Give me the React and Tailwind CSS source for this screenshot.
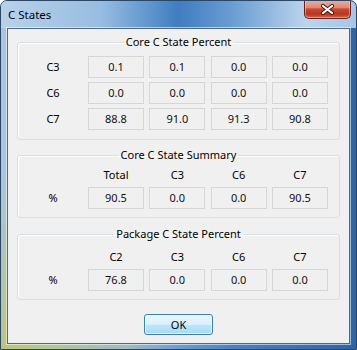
import React from 'react';

const font = { fontFamily: '"Noto Sans", "Open Sans", sans-serif' };

const coreRows = [
  { label: 'C3', values: ['0.1', '0.1', '0.0', '0.0'] },
  { label: 'C6', values: ['0.0', '0.0', '0.0', '0.0'] },
  { label: 'C7', values: ['88.8', '91.0', '91.3', '90.8'] },
];

const ValueBox = ({ value }) => (
  <div className="w-[56px] h-[22px] border border-[#d6d6d6] bg-[#f0f0f0] flex items-center justify-center text-[11px] text-[#111]">
    {value}
  </div>
);

const Row = ({ label, values }) => (
  <div className="flex items-center">
    <div className="w-[70px] text-center text-[11px] text-black">{label}</div>
    <div className="flex gap-[5.33px]">
      {values.map((v, i) => (
        <ValueBox key={i} value={v} />
      ))}
    </div>
  </div>
);

const HeaderRow = ({ headers }) => (
  <div className="flex items-center h-[15px]">
    <div className="w-[70px]" />
    <div className="flex gap-[5.33px]">
      {headers.map(h => (
        <div key={h} className="w-[56px] text-center text-[11px] leading-[15px] text-black">{h}</div>
      ))}
    </div>
  </div>
);

const GroupBox = ({ title, className, children }) => (
  <fieldset className={`border border-[#d5dfe5] rounded-[3px] shadow-[inset_1px_1px_0_#fff] ${className}`}>
    <legend className="mx-auto px-[2px] text-[11px] leading-[14px] text-black">{title}</legend>
    {children}
  </fieldset>
);

const CloseButton = () => (
  <div className="w-[47px] h-[19px] -mt-[1px] rounded-b-[5px] border border-t-0 border-[#6a2016] bg-[linear-gradient(to_bottom,#eab0a1_0%,#dc8a76_42%,#c74a33_50%,#b8361f_78%,#d2654b_100%)] shadow-[inset_0_0_0_1px_rgba(255,220,210,0.45)] flex items-center justify-center">
    <svg width="15" height="11" viewBox="0 0 15 11">
      <path d="M3 2 L12 9 M12 2 L3 9" stroke="#4a140c" strokeWidth="4" strokeLinecap="round" />
      <path d="M3 2 L12 9 M12 2 L3 9" stroke="#ffffff" strokeWidth="2.2" strokeLinecap="round" />
    </svg>
  </div>
);

export default function App() {
  return (
    <div
      style={font}
      className="w-[357px] h-[350px] flex flex-col border border-[#2c4766] rounded-t-[7px] overflow-hidden bg-[radial-gradient(circle_at_0%_100%,rgba(186,198,120,0.95),transparent_35%),linear-gradient(to_right,#a9c5df_0%,#93b7dc_35%,#4a82c0_65%,#2c64a6_100%)]"
    >
      {/* Title bar */}
      <div className="h-[27px] shrink-0 flex justify-between items-start bg-[linear-gradient(to_right,#b8d1ea_0%,#98bde2_28%,#3f7dc0_50%,#6c9fd3_66%,#bcd4ec_86%,#a7c5e4_100%)]">
        <div className="pl-[7px] pt-[6px] text-[11.5px] leading-[16px] text-black">C States</div>
        <div className="mr-[5px]">
          <CloseButton />
        </div>
      </div>

      {/* Client area */}
      <div className="flex-1 mx-[6px] mb-[5px] border border-[#4d6a8c] bg-[#f0f0f0] shadow-[0_0_0_1px_rgba(255,255,255,0.55)] px-[9px] pt-[6px] flex flex-col">
        <GroupBox title="Core C State Percent" className="pt-[7px] pb-[9px]">
          <div className="flex flex-col gap-[4px]">
            {coreRows.map(r => (
              <Row key={r.label} label={r.label} values={r.values} />
            ))}
          </div>
        </GroupBox>

        <GroupBox title="Core C State Summary" className="mt-[8px] pt-[5px] pb-[8px]">
          <HeaderRow headers={['Total', 'C3', 'C6', 'C7']} />
          <div className="mt-[5px]">
            <Row label="%" values={['90.5', '0.0', '0.0', '90.5']} />
          </div>
        </GroupBox>

        <GroupBox title="Package C State Percent" className="mt-[9px] pt-[8px] pb-[8px]">
          <HeaderRow headers={['C2', 'C3', 'C6', 'C7']} />
          <div className="mt-[5px]">
            <Row label="%" values={['76.8', '0.0', '0.0', '0.0']} />
          </div>
        </GroupBox>

        <div className="mt-[14px] flex justify-center">
          <button className="w-[69px] h-[21px] rounded-[3px] border border-[#3c7fb1] bg-[linear-gradient(to_bottom,#eaf6fd_0%,#d9f0fc_50%,#bee6fd_51%,#a7d9f5_100%)] shadow-[inset_0_0_0_1px_rgba(255,255,255,0.7)] text-[11px] leading-[19px] text-black">
            OK
          </button>
        </div>
      </div>
    </div>
  );
}
